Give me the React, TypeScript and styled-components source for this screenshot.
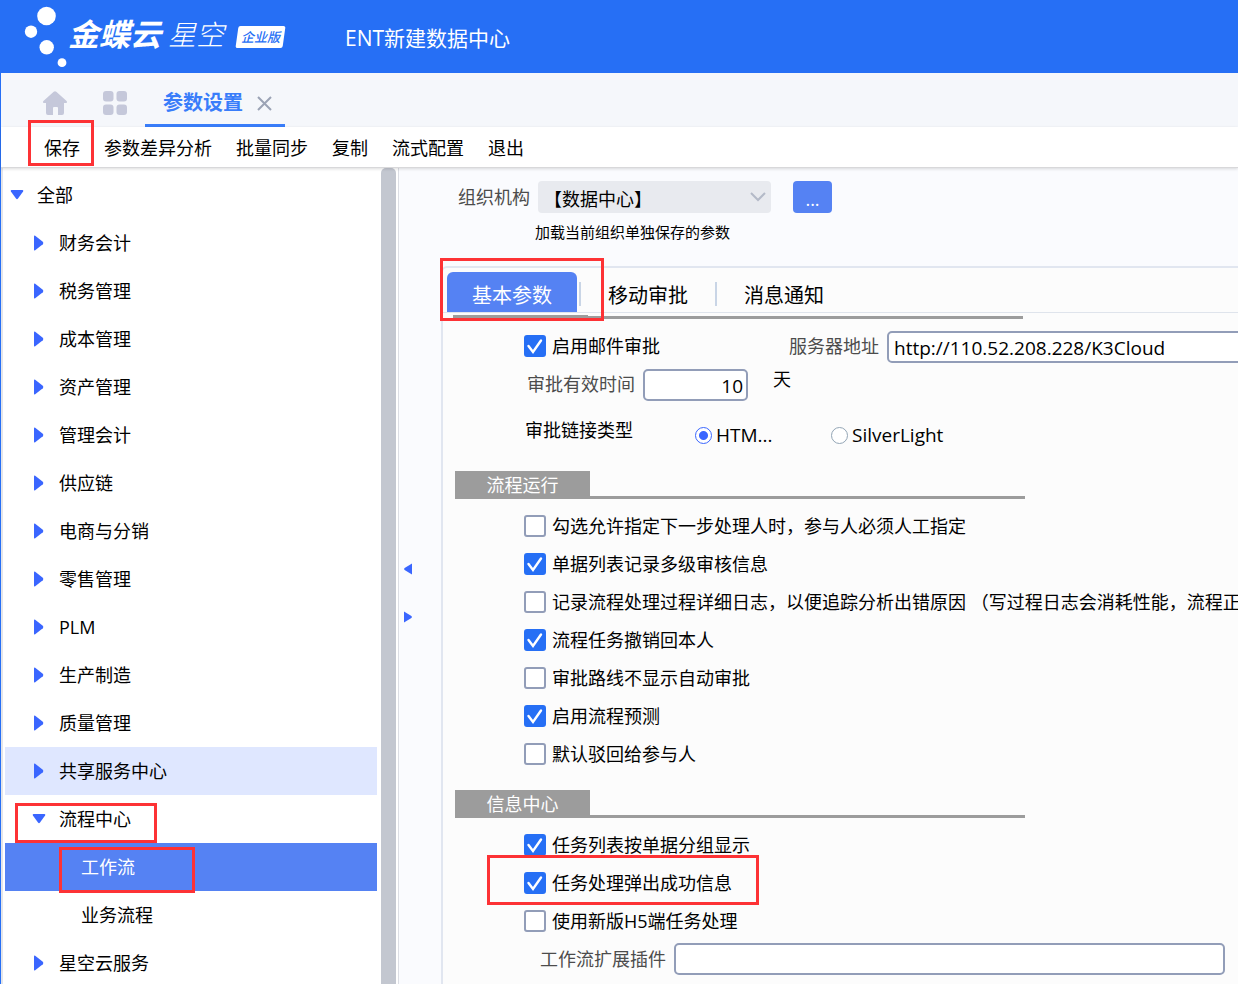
import React, { useState } from "react";
import styled, { createGlobalStyle, css } from "styled-components";

const GlobalStyle = createGlobalStyle`
  *, *::before, *::after { box-sizing: border-box; }
  html, body { margin: 0; padding: 0; }
  body {
    overflow: hidden;
    background: #fff;
    color: #000;
    font-family: "Open Sans", "Noto Sans CJK SC", sans-serif;
    font-size: 18px;
    line-height: 24px;
    /* just under regular, so that the Chinese face takes its demi-light cut */
    font-weight: 399;
  }
  button, input, select { font: inherit; color: inherit; margin: 0; }
  button { border: 0; padding: 0; background: none; cursor: pointer; white-space: nowrap; }
  ul { list-style: none; margin: 0; padding: 0; }
`;

const BLUE = "#266ff5";
const ACCENT = "#5582f3";
const ARROW = "#3a66ff";
const FIELD_BORDER = "#929db8";
const SECTION_GRAY = "#9c9c9c";

const Page = styled.div`
  display: flex;
  flex-direction: column;
  height: 100vh;
  overflow: hidden;
`;

/* Red frame drawn round the parts a reader has to click */
const Callout = styled.span<{ $inset: string }>`
  position: absolute;
  inset: ${(p) => p.$inset};
  border: 3px solid #fd3235;
  pointer-events: none;
  z-index: 3;
`;

/* ---------- header ---------- */

const Header = styled.header`
  flex: none;
  display: flex;
  align-items: center;
  height: 73px;
  background: ${BLUE};
  color: #fff;
`;

const Brand = styled.div`
  display: flex;
  align-items: center;
  width: 345px;
  height: 100%;
  padding-left: 24px;
  white-space: nowrap;
`;

const BrandName = styled.span`
  font-size: 31px;
  line-height: 68px;
  height: 73px;
  font-weight: 700;
  font-style: italic;
`;

const BrandSeries = styled.span`
  margin-left: 7px;
  font-size: 28px;
  line-height: 68px;
  height: 73px;
  font-weight: 300;
  font-style: italic;
`;

const Edition = styled.span`
  position: relative;
  z-index: 0;
  margin-left: 12px;
  padding: 0 5px;
  color: ${BLUE};
  font-size: 13px;
  line-height: 22px;
  font-weight: 500;
  font-style: italic;
  &::before {
    content: "";
    position: absolute;
    inset: 0 1px;
    z-index: -1;
    background: #fff;
    border-radius: 2px;
    transform: skewX(-8deg);
  }
`;

const CenterName = styled.h1`
  margin: 0;
  padding-top: 2px;
  font-size: 21px;
  line-height: 28px;
  font-weight: inherit;
`;

/* ---------- window tabs and toolbar ---------- */

const Body = styled.div`
  flex: 1;
  min-height: 0;
  display: flex;
  flex-direction: column;
  border-left: 1px solid ${BLUE};
`;

const WindowTabs = styled.nav`
  flex: none;
  display: flex;
  align-items: stretch;
  height: 54px;
  padding-left: 24px;
  background: #f5f7fb;
`;

const IconButton = styled.button`
  display: flex;
  align-items: center;
  justify-content: center;
  width: 60px;
  padding-top: 6px;
  color: #c5c8da;
`;

const WindowTab = styled.div`
  display: flex;
  align-items: center;
  gap: 14px;
  width: 140px;
  padding: 9px 13px 0 18px;
  border-bottom: 3px solid #397dfa;
`;

const WindowTabLabel = styled.button`
  color: #397dfa;
  font-size: 20px;
  font-weight: 700;
`;

const CloseButton = styled.button`
  display: flex;
  color: #9ba3b5;
`;

const Toolbar = styled.div`
  position: relative;
  z-index: 1;
  flex: none;
  display: flex;
  align-items: center;
  gap: 24px;
  height: 41px;
  padding: 2px 0 0 43px;
  border-bottom: 1px solid #d8d8da;
  background: #fff;
  box-shadow: 0 1px 3px rgba(0, 0, 0, 0.14);
`;

const ToolButton = styled.button`
  position: relative;
`;

/* ---------- tree ---------- */

const Workspace = styled.div`
  flex: 1;
  min-height: 0;
  display: flex;
`;

const Sidebar = styled.aside`
  flex: none;
  display: flex;
  width: 398px;
  border-left: 2px solid #e4e5e9;
  border-right: 1px solid #dcdee4;
  background: #fff;
`;

const Tree = styled.ul`
  flex: 1;
  padding: 3px 4px 0 2px;
  overflow: hidden;
`;

const TreeRow = styled.button<{ $level: number; $state?: string }>`
  position: relative;
  display: flex;
  align-items: center;
  width: 100%;
  height: 48px;
  padding-left: ${(p) => 5 + p.$level * 22}px;
  text-align: left;
  ${(p) => p.$state === "hover" && css`background: #dfe7ff;`}
  ${(p) => p.$state === "selected" && css`background: ${ACCENT}; color: #fff;`}
`;

const TreeArrow = styled.span`
  display: flex;
  flex: none;
  width: 27px;
`;

const ScrollTrack = styled.div`
  flex: none;
  width: 17px;
  padding-right: 2px;
`;

const ScrollThumb = styled.div`
  height: 100%;
  border-radius: 5px 5px 0 0;
  background: #c3c7d0;
`;

/* ---------- main form ---------- */

const Main = styled.main`
  flex: 1;
  min-width: 0;
  display: flex;
  background: #fafbfe;
`;

const Splitter = styled.div`
  flex: none;
  display: flex;
  flex-direction: column;
  width: 42px;
  padding-top: 377px;
`;

const SplitButton = styled.button`
  display: flex;
  align-items: center;
  height: 48px;
  padding-left: 5px;
`;

const Content = styled.div`
  flex: 1;
  min-width: 0;
  display: flex;
  flex-direction: column;
`;

const OrgRow = styled.div`
  flex: none;
  display: flex;
  align-items: center;
  height: 32px;
  margin: 13px 0 0 17px;
`;

const FieldLabel = styled.label`
  color: #4c4c4c;
  white-space: nowrap;
`;

const SelectBox = styled.div`
  position: relative;
  width: 233px;
  margin: 0 22px 0 8px;
  svg { position: absolute; right: 5px; top: 11px; pointer-events: none; }
`;

const Select = styled.select`
  appearance: none;
  width: 100%;
  height: 32px;
  padding: 3px 24px 0 6px;
  border: 0;
  border-radius: 4px;
  background: #e8eaef;
`;

const MoreButton = styled.button`
  width: 39px;
  height: 32px;
  padding-top: 4px;
  border-radius: 4px;
  background: ${ACCENT};
  color: #fff;
  font-size: 18px;
`;

const Hint = styled.p`
  flex: none;
  margin: 9px 0 24px 94px;
  font-size: 15px;
  line-height: 20px;
`;

const Panel = styled.section`
  flex: 1;
  min-height: 0;
  display: flex;
  flex-direction: column;
  border: solid #e1e6f0;
  border-width: 2px 0 0 2px;
  border-top-left-radius: 6px;
  background: #fcfcfc;
`;

const PanelTabs = styled.div`
  flex: none;
  display: flex;
  align-items: stretch;
  height: 45px;
  padding: 4px 0 0 4px;
  border-bottom: 1px solid #dfe4ec;
`;

const PanelTab = styled.button<{ $active?: boolean }>`
  position: relative;
  padding: 8px 27px 0;
  font-size: 20px;
  ${(p) => p.$active && css`
    width: 130px;
    padding: 8px 0 0;
    margin-right: 2px;
    border-radius: 6px 6px 0 0;
    background: ${ACCENT};
    color: #fff;
  `}
`;

const TabDivider = styled.span`
  width: 2px;
  margin: 10px 0 6px;
  background: #c9d5e6;
`;

const FormScroll = styled.div`
  flex: 1;
  min-height: 0;
  overflow: hidden;
  white-space: nowrap;
`;

const SectionHead = styled.div`
  display: flex;
  width: 570px;
  height: 28px;
  margin-left: 12px;
  border-bottom: 3px solid ${SECTION_GRAY};
`;

const SectionTitle = styled.h2`
  width: 135px;
  height: 28px;
  margin: 0;
  background: ${SECTION_GRAY};
  color: #fff;
  font-size: 18px;
  line-height: 28px;
  font-weight: inherit;
  text-align: center;
`;

/* Bottom edge of the section heading that is scrolled under the tabs */
const ScrolledHead = styled.div`
  height: 4px;
  margin-top: 2px;
  background:
    linear-gradient(${SECTION_GRAY}, ${SECTION_GRAY}) 10px 1px / 570px 3px no-repeat,
    linear-gradient(${SECTION_GRAY}, ${SECTION_GRAY}) 10px 0 / 135px 4px no-repeat;
`;

const Rows = styled.div<{ $end: number }>`
  padding: 8px 0 ${(p) => p.$end}px 81px;
`;

const Row = styled.div<{ $tall?: boolean; $indent?: number }>`
  position: relative;
  display: flex;
  align-items: center;
  height: ${(p) => (p.$tall ? 64 : 38)}px;
  padding-left: ${(p) => p.$indent ?? 0}px;
`;

const CheckLabel = styled.label<{ $width?: number }>`
  flex: none;
  display: flex;
  align-items: center;
  gap: 6px;
  width: ${(p) => (p.$width ? `${p.$width}px` : "auto")};
`;

const CheckBox = styled.span`
  position: relative;
  display: flex;
  width: 22px;
  height: 22px;
  svg { position: absolute; inset: 0; pointer-events: none; }
`;

const CheckInput = styled.input`
  appearance: none;
  width: 22px;
  height: 22px;
  border: 2px solid ${FIELD_BORDER};
  border-radius: 3px;
  background: #fff;
  &:checked { border-color: ${BLUE}; background: ${BLUE}; }
`;

const TextInput = styled.input`
  height: 32px;
  padding: 1px 5px 0;
  border: 2px solid ${FIELD_BORDER};
  border-radius: 5px;
  background: #fff;
  font-size: 19px;
`;

const DaysInput = styled(TextInput)`
  width: 105px;
  margin: 2px 25px 0 8px;
  padding-right: 3px;
  text-align: right;
`;

const ServerInput = styled(TextInput)`
  flex: 1 0 360px;
  margin: 2px 0 0 8px;
`;

const PluginInput = styled(TextInput)`
  flex: 1;
  min-width: 0;
  margin: 0 13px 0 8px;
`;

const StaticText = styled.span`
  padding-bottom: 10px;
`;

const RadioLabel = styled.label`
  display: flex;
  align-items: center;
  gap: 4px;
  width: 136px;
  font-size: 19px;
`;

const RadioGroup = styled.div`
  display: flex;
  margin-left: 62px;
`;

const RadioInput = styled.input`
  appearance: none;
  width: 17px;
  height: 17px;
  border: 1px solid #93a5b5;
  border-radius: 50%;
  background: #fff;
  &:checked {
    border-color: ${ARROW};
    background: radial-gradient(circle, ${ARROW} 4px, #fff 5px);
  }
`;

const Logo = () => (
  <svg width="44" height="73" viewBox="24 0 44 73" fill="#fff" aria-hidden="true">
    <circle cx="46.5" cy="16" r="9.3" />
    <circle cx="31" cy="31.7" r="6.2" />
    <circle cx="46.7" cy="47.3" r="7.2" />
    <circle cx="62" cy="62.7" r="4.4" />
  </svg>
);

const HomeIcon = () => (
  <svg width="24" height="24" viewBox="0 0 24 24" fill="currentColor" aria-hidden="true">
    <path d="M10.7.7a2 2 0 0 1 2.6 0L23.6 10c.7.7.4 2-.7 2H21v10a2 2 0 0 1-2 2h-4v-7a1 1 0 0 0-1-1h-3a1 1 0 0 0-1 1v7H5a2 2 0 0 1-2-2V12H1.1C0 12-.3 10.7.4 10z" />
  </svg>
);

const GridIcon = () => (
  <svg width="24" height="24" viewBox="0 0 24 24" fill="currentColor" aria-hidden="true">
    <rect width="10.5" height="10.5" rx="3" />
    <rect x="13.5" width="10.5" height="10.5" rx="3" />
    <rect y="13.5" width="10.5" height="10.5" rx="3" />
    <rect x="13.5" y="13.5" width="10.5" height="10.5" rx="3" />
  </svg>
);

const CloseIcon = () => (
  <svg width="15" height="15" viewBox="0 0 15 15" fill="none" stroke="currentColor" strokeWidth="2" aria-hidden="true">
    <path d="M1 1l13 13M14 1L1 14" />
  </svg>
);

const ArrowDown = () => (
  <svg width="14" height="10" viewBox="0 0 14 10" fill={ARROW} aria-hidden="true">
    <path d="M1.5 0h11q1.3.2.6 1.4L8 8.6q-1 1.2-2 0L.9 1.4Q.2.2 1.5 0z" />
  </svg>
);

const ArrowRight = () => (
  <svg width="14" height="16" viewBox="0 0 14 16" fill={ARROW} aria-hidden="true">
    <path d="M2 1.2Q2 0 3.2.8l7.6 6q1.2 1.2 0 2.4l-7.6 6Q2 16 2 14.8z" />
  </svg>
);

const SplitArrow = ({ left }: { left?: boolean }) => (
  <svg width="8" height="12" viewBox="0 0 8 12" fill={ARROW} aria-hidden="true">
    <path d={left ? "M8 .5v11L.6 7q-1-1 0-2z" : "M0 .5v11L7.4 7q1-1 0-2z"} />
  </svg>
);

const Chevron = () => (
  <svg width="16" height="10" viewBox="0 0 16 10" fill="none" stroke="#b4bac8" strokeWidth="2" aria-hidden="true">
    <path d="M1 1l7 7 7-7" />
  </svg>
);

const Tick = () => (
  <svg width="22" height="22" viewBox="0 0 22 22" fill="none" stroke="#fff" strokeWidth="2.4" aria-hidden="true">
    <path d="M4.500 11l4.500 6 8-11.500" strokeLinecap="round" />
  </svg>
);

function Check({ label, on = false, width }: { label: string; on?: boolean; width?: number }) {
  const [checked, setChecked] = useState(on);
  return (
    <CheckLabel $width={width}>
      <CheckBox>
        <CheckInput type="checkbox" checked={checked} onChange={() => setChecked(!checked)} />
        {checked && <Tick />}
      </CheckBox>
      {label}
    </CheckLabel>
  );
}

type Node = { label: string; level: number; arrow?: "down" | "right"; state?: string; mark?: string };

const branch = (label: string, state?: string): Node => ({ label, level: 1, arrow: "right", state });

const nodes: Node[] = [
  { label: "全部", level: 0, arrow: "down" },
  branch("财务会计"),
  branch("税务管理"),
  branch("成本管理"),
  branch("资产管理"),
  branch("管理会计"),
  branch("供应链"),
  branch("电商与分销"),
  branch("零售管理"),
  branch("PLM"),
  branch("生产制造"),
  branch("质量管理"),
  branch("共享服务中心", "hover"),
  { label: "流程中心", level: 1, arrow: "down", mark: "8px 220px 0 10px" },
  { label: "工作流", level: 2, state: "selected", mark: "4px 182px -2px 54px" },
  { label: "业务流程", level: 2 },
  branch("星空云服务"),
];

const flowOptions = [
  { label: "勾选允许指定下一步处理人时，参与人必须人工指定" },
  { label: "单据列表记录多级审核信息", on: true },
  { label: "记录流程处理过程详细日志，以便追踪分析出错原因 （写过程日志会消耗性能，流程正" },
  { label: "流程任务撤销回本人", on: true },
  { label: "审批路线不显示自动审批" },
  { label: "启用流程预测", on: true },
  { label: "默认驳回给参与人" },
];

export default function App() {
  return (
    <Page>
      <GlobalStyle />
      <Header>
        <Brand>
          <Logo />
          <BrandName>金蝶云</BrandName>
          <BrandSeries>星空</BrandSeries>
          <Edition>企业版</Edition>
        </Brand>
        <CenterName>ENT新建数据中心</CenterName>
      </Header>
      <Body>
        <WindowTabs>
          <IconButton aria-label="主页"><HomeIcon /></IconButton>
          <IconButton aria-label="应用"><GridIcon /></IconButton>
          <WindowTab>
            <WindowTabLabel>参数设置</WindowTabLabel>
            <CloseButton aria-label="关闭"><CloseIcon /></CloseButton>
          </WindowTab>
        </WindowTabs>
        <Toolbar>
          <ToolButton>保存<Callout $inset="-16px -14px -6px -16px" /></ToolButton>
          {["参数差异分析", "批量同步", "复制", "流式配置", "退出"].map((t) => (
            <ToolButton key={t}>{t}</ToolButton>
          ))}
        </Toolbar>
        <Workspace>
          <Sidebar>
            <Tree>
              {nodes.map((n) => (
                <li key={n.label}>
                  <TreeRow $level={n.level} $state={n.state}>
                    <TreeArrow>
                      {n.arrow === "down" && <ArrowDown />}
                      {n.arrow === "right" && <ArrowRight />}
                    </TreeArrow>
                    {n.label}
                    {n.mark && <Callout $inset={n.mark} />}
                  </TreeRow>
                </li>
              ))}
            </Tree>
            <ScrollTrack><ScrollThumb /></ScrollTrack>
          </Sidebar>
          <Main>
            <Splitter>
              <SplitButton aria-label="收起"><SplitArrow left /></SplitButton>
              <SplitButton aria-label="展开"><SplitArrow /></SplitButton>
            </Splitter>
            <Content>
              <OrgRow>
                <FieldLabel htmlFor="org">组织机构</FieldLabel>
                <SelectBox>
                  <Select id="org"><option>【数据中心】</option></Select>
                  <Chevron />
                </SelectBox>
                <MoreButton>...</MoreButton>
              </OrgRow>
              <Hint>加载当前组织单独保存的参数</Hint>
              <Panel>
                <PanelTabs>
                  <PanelTab $active>基本参数<Callout $inset="-14px -27px -9px -7px" /></PanelTab>
                  <TabDivider />
                  <PanelTab>移动审批</PanelTab>
                  <TabDivider />
                  <PanelTab>消息通知</PanelTab>
                </PanelTabs>
                <FormScroll>
                  <ScrolledHead />
                  <Rows $end={4}>
                    <Row>
                      <Check label="启用邮件审批" on width={265} />
                      <FieldLabel htmlFor="server">服务器地址</FieldLabel>
                      <ServerInput id="server" defaultValue="http://110.52.208.228/K3Cloud" />
                    </Row>
                    <Row $indent={3}>
                      <FieldLabel htmlFor="days">审批有效时间</FieldLabel>
                      <DaysInput id="days" defaultValue="10" />
                      <StaticText>天</StaticText>
                    </Row>
                    <Row $tall $indent={1}>
                      <StaticText>审批链接类型</StaticText>
                      <RadioGroup>
                        <RadioLabel><RadioInput type="radio" name="link" defaultChecked />HTM...</RadioLabel>
                        <RadioLabel><RadioInput type="radio" name="link" />SilverLight</RadioLabel>
                      </RadioGroup>
                    </Row>
                  </Rows>
                  <SectionHead><SectionTitle>流程运行</SectionTitle></SectionHead>
                  <Rows $end={17}>
                    {flowOptions.map((o) => (
                      <Row key={o.label}><Check label={o.label} on={o.on} /></Row>
                    ))}
                  </Rows>
                  <SectionHead><SectionTitle>信息中心</SectionTitle></SectionHead>
                  <Rows $end={17}>
                    <Row><Check label="任务列表按单据分组显示" on /></Row>
                    <Row>
                      <Check label="任务处理弹出成功信息" on />
                      <Callout $inset="-9px 479px -3px -37px" />
                    </Row>
                    <Row><Check label="使用新版H5端任务处理" /></Row>
                    <Row $indent={16}>
                      <FieldLabel htmlFor="plugin">工作流扩展插件</FieldLabel>
                      <PluginInput id="plugin" />
                    </Row>
                  </Rows>
                </FormScroll>
              </Panel>
            </Content>
          </Main>
        </Workspace>
      </Body>
    </Page>
  );
}
